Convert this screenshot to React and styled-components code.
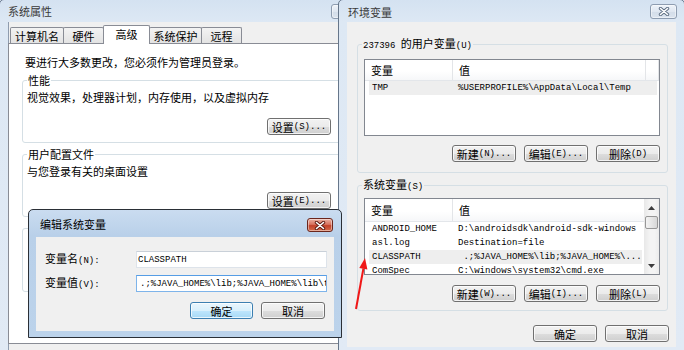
import React from 'react'
import styled, { createGlobalStyle } from 'styled-components'

const GlobalStyle = createGlobalStyle`
  html, body { margin: 0; padding: 0; background: #fff; overflow: hidden; }
  body {
    font-family: "Noto Sans CJK SC", "Noto Sans", sans-serif;
    font-size: 11px;
    line-height: 14px;
    color: #000;
  }
`

const Desktop = styled.div`
  position: relative;
  width: 684px;
  height: 350px;
  overflow: hidden;
  background: #dfe9f5;
`

// windows on the desktop keep their own coordinates
const Window = styled.div`
  position: absolute;
  left: ${p => p.$x}px;
  top: ${p => p.$y}px;
  width: ${p => p.$w}px;
  height: ${p => p.$h}px;
  z-index: ${p => p.$z};
  box-sizing: border-box;
  display: flex;
  flex-direction: column;
  padding: 0 ${p => p.$frame}px ${p => p.$frame - 1}px;
  border: 1px solid ${p => (p.$active ? '#2a2f36' : '#66768a')};
  border-radius: 5px 5px 0 0;
  background: ${p =>
    p.$active
      ? 'linear-gradient(#cadcf0 0, #b9d0e9 26px, #bcd3eb 100%)'
      : 'linear-gradient(#d4e2f1 0, #dde8f4 22px, #e1eaf5 100%)'};
`

const TitleBar = styled.div`
  flex: none;
  height: ${p => p.$h}px;
  margin: 0 -${p => p.$frame}px;
  padding-left: ${p => p.$pad}px;
  display: flex;
  align-items: flex-start;
  justify-content: space-between;
`

const Title = styled.span`
  font-size: 11px;
  line-height: ${p => p.$h}px;
  color: ${p => (p.$active ? '#000' : '#3a3a3a')};
`

const CloseBox = styled.div`
  box-sizing: border-box;
  width: ${p => (p.$red ? 26 : 27)}px;
  height: ${p => (p.$red ? 14 : 15)}px;
  margin-top: ${p => p.$top}px;
  margin-right: ${p => p.$right}px;
  border-radius: 3px;
  display: flex;
  align-items: center;
  justify-content: center;
  border: 1px solid ${p => (p.$red ? '#6b261c' : '#8d9cb0')};
  background: ${p =>
    p.$red
      ? 'linear-gradient(#eab0a2 0%, #d8735f 45%, #c2412a 55%, #d46c4a 100%)'
      : 'linear-gradient(#eef3f9 0%, #dfe7f1 50%, #d3dde9 51%, #dbe4ef 100%)'};
  box-shadow: inset 0 0 0 1px rgba(255, 255, 255, 0.45);
`

const Client = styled.div`
  flex: 1;
  min-height: 0;
  display: flex;
  flex-direction: column;
  background: #f0f0f0;
  border-left: ${p => (p.$edge ? '1px solid #8f9cae' : 'none')};
  padding: ${p => p.$pad || '0'};
`

const Mono = styled.span`
  font-family: "Liberation Mono", monospace;
  font-size: 9px;
`

function T({ children }) {
  const parts = String(children).split(/([\x20-\x7e]+)/)
  return parts.map((s, i) => (i % 2 ? <Mono key={i}>{s}</Mono> : s))
}

const Button = styled.div`
  box-sizing: border-box;
  width: ${p => p.$w || 64}px;
  height: 17px;
  display: inline-flex;
  align-items: center;
  justify-content: center;
  white-space: pre;
  border: 1px solid ${p => (p.$default ? '#3c7fb1' : '#707070')};
  border-radius: 3px;
  background: ${p =>
    p.$default
      ? 'linear-gradient(#eaf6fd 0%, #d9f0fc 50%, #bee6fd 51%, #a7d9f5 100%)'
      : 'linear-gradient(#f2f2f2 0%, #ebebeb 50%, #dddddd 51%, #cfcfcf 100%)'};
  box-shadow: inset 0 0 0 1px rgba(255, 255, 255, 0.75);
`

const ButtonRow = styled.div`
  display: flex;
  justify-content: flex-end;
  gap: 8px;
  margin-top: ${p => p.$mt || 0}px;
  margin-right: ${p => p.$mr || 0}px;
`

/* --- system properties --- */

const TabStrip = styled.div`
  flex: none;
  height: 21px;
  padding-left: 1px;
  display: flex;
  align-items: flex-end;
`

const Tab = styled.div`
  box-sizing: border-box;
  width: ${p => p.$w}px;
  height: ${p => (p.$on ? 19 : 16)}px;
  margin-left: ${p => (p.$first ? 0 : -1)}px;
  margin-bottom: ${p => (p.$on ? -1 : 0)}px;
  position: relative;
  z-index: ${p => (p.$on ? 2 : 0)};
  border: 1px solid #898c95;
  border-bottom: none;
  border-radius: 2px 2px 0 0;
  background: ${p => (p.$on ? '#fff' : 'linear-gradient(#f3f3f3, #e3e3e3)')};
  display: flex;
  justify-content: center;
  padding-top: 1px;
  line-height: 14px;
`

const TabPanel = styled.div`
  flex: none;
  box-sizing: border-box;
  height: 301px;
  margin-left: -1px;
  position: relative;
  z-index: 1;
  background: #fff;
  border: 1px solid #898c95;
  padding: 11px 13px 0;
`

const Intro = styled.div`
  padding-left: 3px;
  margin-bottom: 4px;
`

const Group = styled.fieldset`
  margin: ${p => p.$mt || 0}px 0 0;
  padding: ${p => p.$pad};
  border: 1px solid #d5dfe5;
  border-radius: 3px;
  min-width: 0;
  min-height: ${p => p.$minH || 0}px;
`

const Legend = styled.legend`
  padding: 0 1px;
  line-height: 14px;
`

const Desc = styled.div`
  margin-top: ${p => p.$mt || 0}px;
`

/* --- environment variables --- */

const ListView = styled.div`
  box-sizing: border-box;
  height: 77px;
  margin: ${p => p.$mt}px 0 0 2px;
  border: 1px solid #828790;
  background: #fff;
  display: flex;
  overflow: hidden;
`

const ListBody = styled.div`
  flex: 1;
  min-width: 0;
  overflow: hidden;
`

const Header = styled.div`
  box-sizing: border-box;
  height: ${p => p.$h}px;
  display: grid;
  grid-template-columns: 88px 193px 1fr;
  border-bottom: 1px solid #e3e6ea;
  background: linear-gradient(#ffffff 0%, #ffffff 55%, #f6f7f9 100%);
`

const HeadCell = styled.div`
  padding-left: 6px;
  display: flex;
  align-items: center;
  border-right: 1px solid #e3e5e8;
`

const Row = styled.div`
  height: 14px;
  margin: 0 2px 0 4px;
  display: grid;
  grid-template-columns: 88px 1fr;
  align-items: center;
  background: ${p => (p.$sel ? '#eeeeee' : 'transparent')};
`

const Cell = styled.div`
  padding-left: ${p => p.$pl}px;
  font-family: "Liberation Mono", monospace;
  font-size: 9px;
  line-height: 14px;
  white-space: pre;
  overflow: hidden;
`

const ScrollBar = styled.div`
  flex: none;
  width: 15px;
  display: flex;
  flex-direction: column;
  align-items: center;
  background: linear-gradient(90deg, #e8e8e8, #f4f4f4 40%, #f4f4f4 70%, #ececec);
`

const ScrollArrow = styled.div`
  height: 17px;
  display: flex;
  align-items: center;
  justify-content: center;
`

const Thumb = styled.div`
  box-sizing: border-box;
  width: 13px;
  height: 13px;
  border: 1px solid #979797;
  border-radius: 2px;
  background: linear-gradient(90deg, #f3f3f3, #e6e6e6 50%, #d7d7d7);
`

const Track = styled.div`
  flex: 1;
`

/* --- edit dialog --- */

const Form = styled.div`
  display: grid;
  grid-template-columns: 91px 191px;
  row-gap: 7px;
  align-items: center;
  padding: 14px 0 0 9px;
`

const TextBox = styled.div`
  box-sizing: border-box;
  height: 17px;
  padding-left: ${p => (p.$focus ? 0 : 1)}px;
  display: flex;
  align-items: center;
  overflow: hidden;
  white-space: pre;
  background: #fff;
  border: 1px solid ${p => (p.$focus ? '#7eb4ea' : '#dde3ea')};
  border-top-color: ${p => (p.$focus ? '#569de5' : '#c9d0d8')};
  font-family: "Liberation Mono", monospace;
  font-size: 9px;
`

const Caret = styled.span`
  display: inline-block;
  width: 1px;
  height: 12px;
  margin: 0 2px 0 1px;
  background: #000;
`

const Arrow = styled.svg`
  position: absolute;
  left: 350px;
  top: 250px;
  z-index: 10;
`

const userVars = [{ name: 'TMP', value: '%USERPROFILE%\\AppData\\Local\\Temp', sel: true }]

const sysVars = [
  { name: 'ANDROID_HOME', value: 'D:\\androidsdk\\android-sdk-windows' },
  { name: 'asl.log', value: 'Destination=file' },
  { name: 'CLASSPATH', value: ' .;%JAVA_HOME%\\lib;%JAVA_HOME%\\...', sel: true },
  { name: 'ComSpec', value: 'C:\\windows\\system32\\cmd.exe' },
]

function CloseGlyph({ red }) {
  return (
    <svg width="12" height="9" viewBox="0 0 12 9">
      <path d="M2.5 1.5 L9.5 7.5 M9.5 1.5 L2.5 7.5" stroke={red ? '#5a1a12' : '#5c6d82'} strokeWidth="3.4" strokeLinecap="round" />
      <path d="M2.5 1.5 L9.5 7.5 M9.5 1.5 L2.5 7.5" stroke="#fff" strokeWidth="1.6" strokeLinecap="round" />
    </svg>
  )
}

function Tri({ down }) {
  return (
    <svg width="7" height="4" viewBox="0 0 7 4">
      <path d={down ? 'M0 0 H7 L3.5 4 Z' : 'M0 4 H7 L3.5 0 Z'} fill="#3d3d3d" />
    </svg>
  )
}

function VarList({ rows, mt, headH, scroll }) {
  return (
    <ListView $mt={mt}>
      <ListBody>
        <Header $h={headH}>
          <HeadCell>变量</HeadCell>
          <HeadCell>值</HeadCell>
          <HeadCell />
        </Header>
        {rows.map(r => (
          <Row key={r.name} $sel={r.sel}>
            <Cell $pl={3}>{r.name}</Cell>
            <Cell $pl={1}>{r.value}</Cell>
          </Row>
        ))}
      </ListBody>
      {scroll && (
        <ScrollBar>
          <ScrollArrow><Tri /></ScrollArrow>
          <Thumb />
          <Track />
          <ScrollArrow><Tri down /></ScrollArrow>
        </ScrollBar>
      )}
    </ListView>
  )
}

function SettingsGroup({ title, text, button, mt }) {
  return (
    <Group $mt={mt} $pad="3px 10px 7px 4px">
      <Legend>{title}</Legend>
      <Desc>{text}</Desc>
      <ButtonRow $mt={14}>
        <Button><T>{button}</T></Button>
      </ButtonRow>
    </Group>
  )
}

function SystemProperties() {
  const tabs = [
    { label: '计算机名', w: 54 },
    { label: '硬件', w: 41 },
    { label: '高级', w: 47, on: true },
    { label: '系统保护', w: 53 },
    { label: '远程', w: 41 },
  ]
  return (
    <Window $x={-1} $y={-1} $w={366} $h={370} $z={1} $frame={8}>
      <TitleBar $h={22} $frame={8} $pad={8}>
        <Title $h={22}>系统属性</Title>
        <CloseBox $top={4} $right={6}><CloseGlyph /></CloseBox>
      </TitleBar>
      <Client $edge>
        <TabStrip>
          {tabs.map((t, i) => (
            <Tab key={t.label} $w={t.w} $on={t.on} $first={i === 0}>{t.label}</Tab>
          ))}
        </TabStrip>
        <TabPanel>
          <Intro>要进行大多数更改，您必须作为管理员登录。</Intro>
          <SettingsGroup title="性能" text="视觉效果，处理器计划，内存使用，以及虚拟内存" button="设置(S)..." />
          <SettingsGroup mt={4} title="用户配置文件" text="与您登录有关的桌面设置" button="设置(E)..." />
          {/* third group sits behind the edit dialog; only its frame shows */}
          <Group $mt={11} $minH={62} $pad="0" />
        </TabPanel>
      </Client>
    </Window>
  )
}

function EnvironmentVariables() {
  return (
    <Window $x={338} $y={-1} $w={347} $h={356} $z={2} $frame={8}>
      <TitleBar $h={22} $frame={8} $pad={9}>
        <Title $h={24}>环境变量</Title>
        <CloseBox $top={4} $right={7}><CloseGlyph /></CloseBox>
      </TitleBar>
      <Client $pad="14px 8px 0 10px">
        <Group $pad="0 7px 10px 4px">
          <Legend><T>237396 的用户变量(U)</T></Legend>
          <VarList rows={userVars} mt={6} headH={21} />
          <ButtonRow $mt={9}>
            <Button><T>新建(N)...</T></Button>
            <Button><T>编辑(E)...</T></Button>
            <Button><T>删除(D)</T></Button>
          </ButtonRow>
        </Group>
        <Group $mt={4} $pad="0 7px 8px 4px">
          <Legend><T>系统变量(S)</T></Legend>
          <VarList rows={sysVars} mt={4} headH={23} scroll />
          <ButtonRow $mt={10}>
            <Button><T>新建(W)...</T></Button>
            <Button><T>编辑(I)...</T></Button>
            <Button><T>删除(L)</T></Button>
          </ButtonRow>
        </Group>
        <ButtonRow $mt={14} $mr={-1}>
          <Button>确定</Button>
          <Button>取消</Button>
        </ButtonRow>
      </Client>
    </Window>
  )
}

function EditVariable() {
  return (
    <Window $x={28} $y={209} $w={314} $h={129} $z={3} $frame={7} $active>
      <TitleBar $h={27} $frame={7} $pad={11}>
        <Title $h={28} $active>编辑系统变量</Title>
        <CloseBox $red $top={8} $right={8}><CloseGlyph red /></CloseBox>
      </TitleBar>
      <Client>
        <Form>
          <span><T>变量名(N):</T></span>
          <TextBox>CLASSPATH</TextBox>
          <span><T>变量值(V):</T></span>
          <TextBox $focus><Caret />.;%JAVA_HOME%\lib;%JAVA_HOME%\lib\tools.jar</TextBox>
        </Form>
        <ButtonRow $mt={10} $mr={9}>
          <Button $w={63} $default>确定</Button>
          <Button>取消</Button>
        </ButtonRow>
      </Client>
    </Window>
  )
}

export default function App() {
  return (
    <Desktop>
      <GlobalStyle />
      <SystemProperties />
      <EnvironmentVariables />
      <EditVariable />
      <Arrow width="25" height="65" viewBox="0 0 25 65">
        <path d="M6 59 L13.4 18.5" stroke="#f01818" strokeWidth="2" fill="none" />
        <path d="M15 8 L17.4 19.6 L9.3 18.1 Z" fill="#f01818" />
      </Arrow>
    </Desktop>
  )
}
